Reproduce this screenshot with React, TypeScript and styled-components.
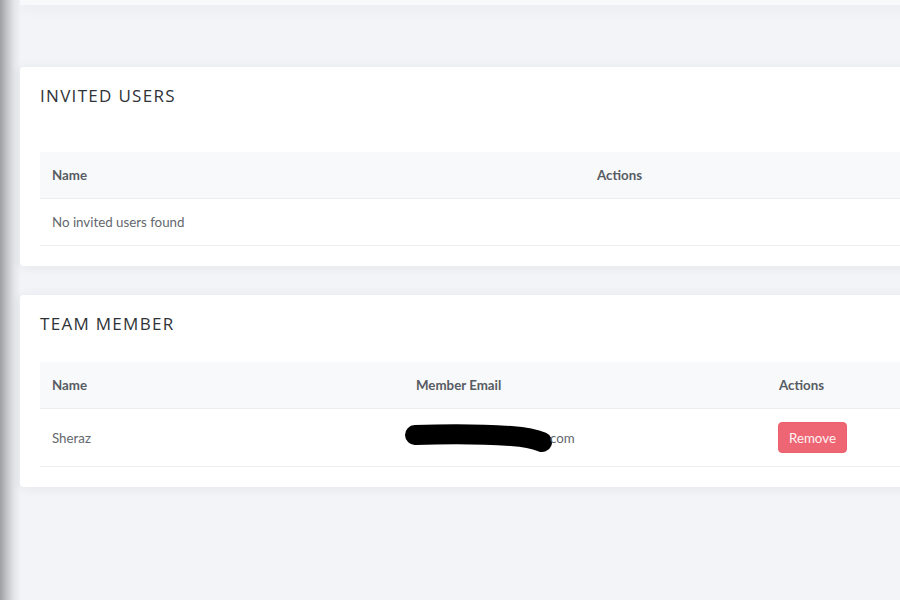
import React from "react";
import styled, { createGlobalStyle } from "styled-components";

const GlobalStyle = createGlobalStyle`
  html, body {
    margin: 0;
    padding: 0;
    background: #f3f4f8;
    overflow: hidden;
  }
  * {
    box-sizing: border-box;
  }
`;

const Layout = styled.div`
  display: flex;
  width: 100vw;
  height: 100vh;
  overflow: hidden;
`;

const SideShadow = styled.div`
  flex: 0 0 20px;
  background: linear-gradient(to right, #9d9ea1 0%, #c4c5c8 35%, #e4e5e9 70%, #f1f2f5 100%);
`;

const Main = styled.div`
  flex: 0 0 940px;
  display: flex;
  flex-direction: column;
`;

const TopBar = styled.div`
  height: 5px;
  background: #f8f9fb;
  box-shadow: 0 2px 14px rgba(0, 0, 0, 0.08);
`;

const Content = styled.div`
  display: flex;
  flex-direction: column;
  gap: 29px;
  padding-top: 62px;
`;

const Card = styled.section`
  background: #ffffff;
  border-radius: 4px;
  box-shadow: 0 1px 12px rgba(40, 45, 60, 0.07);
  padding: 19px 20px 20px 20px;
`;

const CardTitle = styled.h4<{ $gap: number }>`
  margin: 0 0 ${(p) => p.$gap}px 0;
  font-family: "Open Sans", "Liberation Sans", sans-serif;
  font-size: 17px;
  font-weight: 400;
  line-height: 20px;
  letter-spacing: 1.3px;
  text-transform: uppercase;
  color: #2f3337;
`;

const Table = styled.table`
  width: 880px;
  table-layout: fixed;
  border-collapse: collapse;
  font-family: Lato, "Open Sans", sans-serif;
  font-size: 13.3px;
  color: #62676e;
`;

const Col = styled.col<{ $w: number }>`
  width: ${(p) => p.$w}px;
`;

const HeadCell = styled.th`
  text-align: left;
  font-weight: 700;
  color: #575c63;
  background: #f8f9fa;
  padding: 14px 12px;
  line-height: 18px;
  border-bottom: 1px solid #ebedf0;
`;

const Cell = styled.td<{ $tall?: boolean }>`
  padding: ${(p) => (p.$tall ? "13px 12px" : "14px 12px")};
  line-height: 18px;
  vertical-align: middle;
  border-bottom: 1px solid #ebedf0;
`;

const EmailWrap = styled.div`
  display: flex;
  align-items: center;
  height: 30px;
  margin-left: -13px;
`;

const Redaction = styled.svg`
  display: block;
  flex: 0 0 auto;
  margin-right: -3px;
`;

const RemoveButton = styled.button`
  display: block;
  font-family: Lato, "Open Sans", sans-serif;
  font-size: 13.3px;
  color: #fff3f4;
  background: #ee6673;
  border: 1px solid #ec5f6d;
  border-radius: 4px;
  height: 31px;
  padding: 0 10px;
  margin-left: -1px;
  cursor: pointer;
`;

export default function App() {
  return (
    <>
      <GlobalStyle />
      <Layout>
        <SideShadow />
        <Main>
          <TopBar />
          <Content>
            <Card>
              <CardTitle $gap={46}>Invited Users</CardTitle>
              <Table>
                <colgroup>
                  <Col $w={545} />
                  <Col $w={335} />
                </colgroup>
                <thead>
                  <tr>
                    <HeadCell>Name</HeadCell>
                    <HeadCell>Actions</HeadCell>
                  </tr>
                </thead>
                <tbody>
                  <tr>
                    <Cell colSpan={2}>No invited users found</Cell>
                  </tr>
                </tbody>
              </Table>
            </Card>
            <Card>
              <CardTitle $gap={28}>Team Member</CardTitle>
              <Table>
                <colgroup>
                  <Col $w={364} />
                  <Col $w={363} />
                  <Col $w={153} />
                </colgroup>
                <thead>
                  <tr>
                    <HeadCell>Name</HeadCell>
                    <HeadCell>Member Email</HeadCell>
                    <HeadCell>Actions</HeadCell>
                  </tr>
                </thead>
                <tbody>
                  <tr>
                    <Cell $tall>Sheraz</Cell>
                    <Cell $tall>
                      <EmailWrap>
                        <Redaction width="150" height="30" viewBox="0 0 150 30">
                          <path
                            d="M12 12 C40 11 80 11 108 13 C122 14 132 16 139 19"
                            fill="none"
                            stroke="#000"
                            strokeWidth="20"
                            strokeLinecap="round"
                          />
                        </Redaction>
                        com
                      </EmailWrap>
                    </Cell>
                    <Cell $tall>
                      <RemoveButton>Remove</RemoveButton>
                    </Cell>
                  </tr>
                </tbody>
              </Table>
            </Card>
          </Content>
        </Main>
      </Layout>
    </>
  );
}
